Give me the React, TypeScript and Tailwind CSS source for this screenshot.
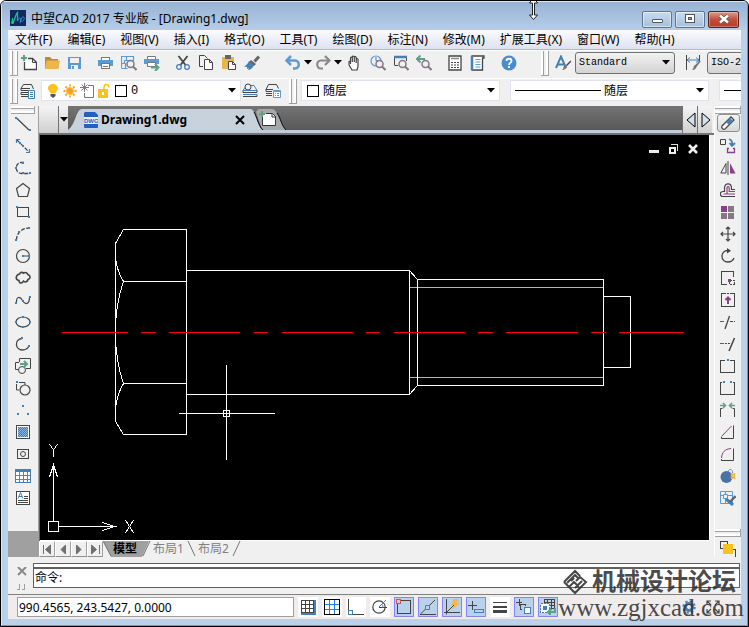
import type { ReactNode } from "react";

const menus = [
  "文件(F)", "编辑(E)", "视图(V)", "插入(I)", "格式(O)", "工具(T)",
  "绘图(D)", "标注(N)", "修改(M)", "扩展工具(X)", "窗口(W)", "帮助(H)",
];

const K = "#444444";
const B = "#4480b8";
const L = "#5b9bd5";
const P = "#8a3f8a";
const G = "#5fa08a";
const Y = "#fcc21c";

function Svg({ children, w = 16, h = 16, crisp = false }: { children: ReactNode; w?: number; h?: number; crisp?: boolean }) {
  return (
    <svg
      width={w}
      height={h}
      viewBox={`0 0 ${w} ${h}`}
      fill="none"
      stroke={K}
      shapeRendering={crisp ? "crispEdges" : "auto"}
      className="block shrink-0"
      aria-hidden="true"
    >
      {children}
    </svg>
  );
}

function Tool({ label, children }: { label: string; children: ReactNode }) {
  return (
    <button type="button" aria-label={label} className="flex h-4 w-4 shrink-0 items-center justify-center">
      {children}
    </button>
  );
}

function Grip() {
  return (
    <div className="flex h-[26px] shrink-0 gap-[2px] border-b border-[#a0a0a0]">
      <span className="w-[3px] border-r border-[#a0a0a0] bg-white" />
      <span className="w-[3px] border-r border-[#a0a0a0] bg-white" />
    </div>
  );
}

function SideGrip() {
  return (
    <div className="flex w-full flex-col gap-[2px] border-r border-[#a0a0a0]">
      <span className="h-[3px] border-b border-[#a0a0a0] bg-white" />
      <span className="h-[3px] border-b border-[#a0a0a0] bg-white" />
    </div>
  );
}

function Caret() {
  return (
    <svg width="8" height="5" viewBox="0 0 8 5" className="block shrink-0" aria-hidden="true">
      <path d="M0 0h8L4 4.500z" fill="#000" />
    </svg>
  );
}

const glass = (
  <>
    <circle cx="9.500" cy="9" r="3.500" fill="#f0f0f0" stroke="#857785" strokeWidth="1.500" />
    <path d="M12 11.500l3.500 3.500" stroke="#857785" strokeWidth="2" />
  </>
);

const fileTools = [
  {
    label: "新建",
    icon: (
      <Svg>
        <path d="M3.500 7v7.500h12v-7l-4-4H7" fill="#fff" strokeWidth="1.300" />
        <path d="M11.500 3.500v4h4" />
        <path d="M3 0v6M0 3h6" stroke={G} strokeWidth="2" />
      </Svg>
    ),
  },
  {
    label: "打开",
    icon: (
      <Svg>
        <path d="M1 13.500V2h5l2 2h6v9.500z" fill="#c08a30" stroke="none" />
        <path d="M1 14l1.500-8.500H16L14.500 14z" fill="#edb64d" stroke="none" />
      </Svg>
    ),
  },
  {
    label: "保存",
    icon: (
      <Svg>
        <path d="M1 2h13v12H1z" fill={L} stroke="none" />
        <path d="M3 3h9v5H3zM4 10h7v4H4z" fill="#f0f0f0" stroke="none" />
        <path d="M5 11h2v3H5z" fill={L} stroke="none" />
      </Svg>
    ),
  },
];

const printTools = [
  {
    label: "打印",
    icon: (
      <Svg crisp>
        <path d="M3.500 2.500h8v3h-8z" fill="#fff" stroke="#777" />
        <path d="M0 5h15v6H0z" fill={L} stroke="none" />
        <path d="M3.500 8.500h8v5h-8z" fill="#fff" stroke="#777" />
        <path d="M5 11.500h5" stroke="#777" />
      </Svg>
    ),
  },
  {
    label: "打印预览",
    icon: (
      <Svg>
        <path d="M.5 13V1.500h12V6M.5 8.500h4V13M.5 13.500h6M5.500 1.500v4h7M3.500 8.500v-3h3" stroke={L} strokeWidth="1.200" />
        {glass}
      </Svg>
    ),
  },
  {
    label: "发布",
    icon: (
      <Svg>
        <path d="M3.500 1.500h8v3h-8z" fill="#fff" stroke="#777" />
        <path d="M0 4h15v5H0z" fill={L} stroke="none" />
        <path d="M3.500 7.500h8v4h-8z" fill="#fff" stroke="#777" />
        <path d="M7 12.500h7M11 9l3.500 3.500L11 16" stroke={G} strokeWidth="2" />
      </Svg>
    ),
  },
];

const editTools = [
  {
    label: "剪切",
    icon: (
      <Svg>
        <path d="M3.500 1l7 9M12.500 1l-7 9" strokeWidth="1.800" />
        <circle cx="4" cy="12" r="2.300" stroke={B} strokeWidth="1.300" />
        <circle cx="12" cy="12" r="2.300" stroke={B} strokeWidth="1.300" />
      </Svg>
    ),
  },
  {
    label: "复制",
    icon: (
      <Svg>
        <path d="M5 11.500H1.500v-11h5l3 3" />
        <path d="M6.500 4.500h5l3 3v7h-8z" fill="#fff" />
        <path d="M11.500 4.500v3h3" />
      </Svg>
    ),
  },
  {
    label: "粘贴",
    icon: (
      <Svg>
        <path d="M1 2h12v12H1z" fill="#e8b44c" stroke="none" />
        <path d="M4 0h6v4H4z" fill="#666" stroke="none" />
        <path d="M7.500 6.500h4l3 3v5h-7z" fill="#fff" />
        <path d="M11.500 6.500v3h3" />
      </Svg>
    ),
  },
  {
    label: "特性匹配",
    icon: (
      <Svg>
        <path d="M15 1.500l-4.500 5" strokeWidth="3" stroke="#666" />
        <path d="M7 5l5 4-2 2-5-4z" fill="#666" stroke="none" />
        <path d="M5 6l5 4.500c-2 3-4 4.500-6 4.500l1-2-2 1 0-2-3-.5C3 10 4 8 5 6z" fill={B} stroke="none" />
      </Svg>
    ),
  },
];

const zoomTools = [
  {
    label: "平移",
    icon: (
      <Svg>
        <path
          d="M5 15c-1-2-3-4-3-5.500V7c0-1 1.500-1 1.500 0v2V3c0-1.200 1.800-1.200 1.800 0v4V2c0-1.200 2-1.200 2 0v5V2.500c0-1.200 1.900-1.200 1.900 0V8V4.500c0-1.200 1.800-1.200 1.800 0V11c0 2-1 3-1 4z"
          fill="#fff"
          strokeWidth="1.200"
        />
      </Svg>
    ),
  },
  {
    label: "实时缩放",
    icon: (
      <Svg>
        <circle cx="6" cy="6" r="5" stroke={L} strokeWidth="1.200" />
        <path d="M6 2v4h3" stroke={B} />
        {glass}
      </Svg>
    ),
  },
  {
    label: "窗口缩放",
    icon: (
      <Svg>
        <path d="M1.500 10V2M13.500 2v4M1.500 10.500H5" />
        <path d="M1 2h13" stroke={B} strokeWidth="2.500" />
        {glass}
      </Svg>
    ),
  },
  {
    label: "缩放上一个",
    icon: (
      <Svg>
        <path d="M1 4h8M4.500.5L1 4l3.500 3.500" stroke={G} strokeWidth="2" />
        {glass}
      </Svg>
    ),
  },
];

const panelTools = [
  {
    label: "计算器",
    icon: (
      <Svg>
        <path d="M2 1h12v14H2z" fill="#fff" strokeWidth="1.300" />
        <path d="M4 3.500h8" stroke="#888" strokeWidth="1.500" />
        <path d="M4 7.500h8M4 10h8M4 12.500h8" strokeDasharray="2 1" strokeWidth="1.200" />
      </Svg>
    ),
  },
  {
    label: "图纸集",
    icon: (
      <Svg>
        <path d="M2 1h12v2h-1.500v12H2z" fill="#fff" strokeWidth="1.300" />
        <path d="M2 1v14" stroke={B} strokeWidth="2.500" />
        <path d="M5.500 4.500h5M5.500 7h5M5.500 9.500h5M5.500 12h5" stroke={L} />
      </Svg>
    ),
  },
];

function ToolGroup({ tools }: { tools: { label: string; icon: ReactNode }[] }) {
  return (
    <div className="flex shrink-0 gap-[7px]">
      {tools.map((t) => (
        <Tool key={t.label} label={t.label}>{t.icon}</Tool>
      ))}
    </div>
  );
}

const drawTools = [
  { label: "直线", icon: <Svg><path d="M1.500 2l12.500 12" strokeWidth="1.200" /><path d="M0 1h2v2H0zM14 13h2v2h-2z" fill={B} stroke="none" /></Svg> },
  { label: "构造线", icon: <Svg><path d="M2 2l12 12" strokeDasharray="4 1.500" strokeWidth="1.200" /><path d="M1.500 5V1.500H5M14.500 11v3.500H11" stroke={B} strokeWidth="1.200" /><path d="M7 7h2v2H7zM4 4h2v2H4z" fill={B} stroke="none" /></Svg> },
  { label: "多段线", icon: <Svg><path d="M9 2.500H6.500C-.5 2.500-.5 13.500 6.500 13.500H15" strokeDasharray="4 1.500" strokeWidth="1.300" /><path d="M7 2h2v2H7zM0 7h2v2H0zM7 12h2v2H7zM14 12h2v2h-2z" fill={B} stroke="none" /></Svg> },
  { label: "正多边形", icon: <Svg><path d="M8 1.500l6.500 5L12.500 14.500h-9L1.500 6.500z" strokeWidth="1.200" /></Svg> },
  { label: "矩形", icon: <Svg crisp><path d="M2.500 3.500h11v9h-11z" /><path d="M1 2h2v2H1zM13 12h2v2h-2z" fill={B} stroke="none" /></Svg> },
  { label: "圆弧", icon: <Svg><path d="M1.500 14C1.500 7 7 2 14 2" strokeDasharray="4 1.500" strokeWidth="1.300" /><path d="M0 13h2v2H0zM3 5h2v2H3zM13 1h2v2h-2z" fill={B} stroke="none" /></Svg> },
  { label: "圆", icon: <Svg><circle cx="8" cy="8" r="6.500" strokeWidth="1.200" /><path d="M8 8h5" /><path d="M7 7h2v2H7zM13 7h2v2h-2z" fill={B} stroke="none" /></Svg> },
  { label: "修订云线", icon: <Svg><path d="M4.500 4c1-2 3-2 4-.8 2-1.400 4-.3 4.300 1.300 3 .8 3 4.300.2 5-.5 2.600-3 3-4.500 1.700C7 13.800 4 13.500 4 10.500 0 10 .5 5 4.500 4z" strokeWidth="1.600" /></Svg> },
  { label: "样条曲线", icon: <Svg><path d="M1.500 11.500C1 4 5 4 7.500 8.500S14.500 13 14.500 5" strokeWidth="1.200" /><path d="M0 10h2v2H0zM7 8h2v2H7zM14 4h2v2h-2z" fill={B} stroke="none" /></Svg> },
  { label: "椭圆", icon: <Svg><ellipse cx="8" cy="8" rx="7" ry="5" strokeWidth="1.200" /><path d="M7 2h2v2H7zM0 7h2v2H0zM14 7h2v2h-2zM7 12h2v2H7z" fill={B} stroke="none" /></Svg> },
  { label: "椭圆弧", icon: <Svg><path d="M7 2.500C-1 3.500 0 14 7.500 14 11 14 13 12 14 10" strokeWidth="1.300" /><path d="M6 1h2v2H6zM13 9h2v2h-2z" fill={B} stroke="none" /></Svg> },
  { label: "插入块", icon: <Svg><path d="M4.500 4V.5h11v10H11M4 4.500H.5v7H4" /><circle cx="7" cy="12" r="3.500" fill="#f0f0f0" /><path d="M5 6h6M9 3l3 3-3 3" stroke={G} strokeWidth="2" /></Svg> },
  { label: "创建块", icon: <Svg><path d="M4 2.500h6V5M1.500 4v6H4" /><circle cx="10" cy="10" r="5" fill="#f0f0f0" strokeWidth="1.200" /><path d="M1 1h2v2H1z" fill={B} stroke="none" /></Svg> },
  { label: "点", icon: <Svg crisp><path d="M7 3h2v2H7zM2 11h2v2H2zM12 11h2v2h-2z" fill={B} stroke="none" /></Svg> },
  {
    label: "图案填充",
    icon: (
      <Svg crisp>
        <path d="M1.500 1.500h13v13h-13z" fill="#fff" />
        <path d="M3 3h10v10H3z" fill="#8ab4e0" stroke="none" />
        <path d="M3 3.500h10M3 5.500h10M3 7.500h10M3 9.500h10M3 11.500h10" stroke={B} strokeDasharray="1 1" />
        <path d="M4 4.500h9M4 6.500h9M4 8.500h9M4 10.500h9M4 12.500h9" stroke={B} strokeDasharray="1 1" />
      </Svg>
    ),
  },
  { label: "面域", icon: <Svg crisp><path d="M2.500 3.500h11v9h-11z" /><circle cx="8" cy="8" r="2.500" shapeRendering="auto" /></Svg> },
  { label: "表格", icon: <Svg crisp><path d="M.5 1.500h15v13H.5z" fill="#fff" stroke={B} /><path d="M0 1h16v3H0z" fill={B} stroke="none" /><path d="M1 7.500h14M1 11.500h14M4.500 4v10M8.500 4v10M12.500 4v10" stroke="#857785" /></Svg> },
  { label: "多行文字", icon: <Svg crisp><path d="M1.500 1.500h13v13h-13z" fill="#fff" /><path d="M3 8.500l2.500-6L8 8.500M4 6.500h3" stroke={B} shapeRendering="auto" /><path d="M9 6.500h4M9 8.500h4M3 10.500h10M3 12.500h10" /></Svg> },
];

const modifyTools = [
  { label: "复制对象", icon: <Svg><path d="M.5 1.500h5v5h-5z" /><path d="M9 1c3 1 3.500 3 3 6M9.500 5l2.500 3 3-3" stroke={B} strokeWidth="1.800" /><path d="M9 10.500H7.500v4h7v-4H13" stroke={P} strokeWidth="1.300" /></Svg> },
  { label: "镜像", icon: <Svg><path d="M6 3.500v9.500H.8z" /><path d="M8 1v14" /><path d="M10 3v10.500h5.500z" fill={P} stroke="none" /></Svg> },
  { label: "偏移", icon: <Svg><path d="M15 14.500H3c-3.500 0-3.500-5 0-5h1.500V6c0-5.500 7-5.500 7 0v1.500H15" strokeWidth="1.200" /><path d="M15 12H3.500M7 12V6c0-1.800 2.200-1.800 2.200 0v3.500H15" stroke={P} strokeWidth="1.200" /></Svg> },
  { label: "阵列", icon: <Svg crisp><path d="M1 2h6v6H1z" fill={P} stroke="none" /><path d="M8 2h6v6H8zM1 9h6v6H1zM8 9h6v6H8z" fill="#857785" stroke="none" /></Svg> },
  { label: "移动", icon: <Svg><path d="M8 1v14M1 8h14M6 3l2-2 2 2M6 13l2 2 2-2M3 6L1 8l2 2M13 6l2 2-2 2" strokeWidth="1.200" /></Svg> },
  { label: "旋转", icon: <Svg><path d="M8 2.500C0 2.500 0 14 8 14c3 0 5-1.500 6-4" strokeWidth="1.300" /><path d="M7 0l4 2.700L7 5.500z" fill={K} stroke="none" /></Svg> },
  { label: "缩放", icon: <Svg crisp><path d="M7 14.500H1.500v-13h12V7" /><path d="M9.500 10.500h5v4h-5z" strokeDasharray="2 1" /><path d="M8 9h3v3H8z" fill={P} stroke="none" /></Svg> },
  { label: "拉伸", icon: <Svg crisp><path d="M4 1.500H1.500v13h13v-13H12" /><path d="M4 1.500h8" strokeDasharray="2 1" /><path d="M8 12V6M5.500 8L8 5.500 10.500 8" stroke={P} strokeWidth="2" shapeRendering="auto" /></Svg> },
  { label: "修剪", icon: <Svg><path d="M0 7.500h4" stroke={P} /><path d="M5 15l4.500-13" strokeWidth="1.300" /><path d="M10 7.500h5" strokeDasharray="3 1" /></Svg> },
  { label: "延伸", icon: <Svg><path d="M0 7.500h4" stroke={P} /><path d="M5 7.500h5" strokeDasharray="2 1" /><path d="M9 15l5.500-13" strokeWidth="1.500" /></Svg> },
  { label: "打断于点", icon: <Svg crisp><path d="M5 2.500H.5v12h14v-12H10" /><path d="M7 1h2v2H7z" fill={B} stroke="none" /></Svg> },
  { label: "打断", icon: <Svg crisp><path d="M2 2.500H.5v12h14v-12H13" /><path d="M3 1h2v2H3zM10 1h2v2h-2z" fill={B} stroke="none" /></Svg> },
  { label: "合并", icon: <Svg><path d="M.5 15V6.500h2M14.500 15V6.500h-2" /><path d="M0 3.500h5M3 1l2.500 2.500L3 6M15 3.500h-5M12 1L9.500 3.500 12 6" stroke={G} strokeWidth="1.600" /></Svg> },
  { label: "倒角", icon: <Svg><path d="M1.500 12.500L11.500 2" stroke={P} /><path d="M13.500 1.500v13h-12V13" /></Svg> },
  { label: "圆角", icon: <Svg><path d="M1.500 12C2 6 5 3 11 2.500" stroke={P} /><path d="M13.500 2.500v12h-12V13" /></Svg> },
  { label: "分解", icon: <Svg><circle cx="6.500" cy="9" r="6" fill="#4a72a5" stroke="none" /><path d="M8 4c1-4 5-3 4.500 1" stroke="#7089b0" /><path d="M11 6.500h4M11 9.500h4M11.500 5v6M14.500 5v6" stroke="#f0b030" strokeWidth="1.500" /></Svg> },
  { label: "编辑多段线", icon: <Svg><path d="M.5 1.500h12v12H.5zM.5 5.500h12M5.500 1.500v12" stroke={L} /><path d="M3.500 4.500h4v4h-4z" fill="#f0f0f0" stroke={L} /><path d="M6 9l7 6" stroke={B} strokeWidth="3" /><path d="M10 12l5.500-6" stroke="#666" strokeWidth="2.500" /></Svg> },
];

const statusModes = [
  { label: "捕捉", on: false, icon: <Svg crisp><path d="M13 1h3v15h-3zM1 13h15v3H1z" fill={B} stroke="none" /><path d="M1.500 1.500h12v12h-12zM5.500 1v12M9.500 1v12M1 5.500h12M1 9.500h12" fill="none" /></Svg> },
  { label: "栅格", on: false, icon: <Svg crisp><path d="M1 5.500h14M1 10.500h14M5.500 1v14M10.500 1v14" stroke="#1c7cff" strokeWidth="1" /><path d="M.5.5h15v15H.5z" stroke="#000" /></Svg> },
  { label: "正交", on: false, icon: <Svg crisp><path d="M.5 0v15.500H16" /><path d="M.5 11.500h4v4h-4z" stroke={B} /></Svg> },
  { label: "极轴", on: false, icon: <Svg><circle cx="7" cy="8" r="6.200" strokeWidth="1.200" /><path d="M7 8.500h8" /><path d="M7 8l7-7M10 5.500c1 1 1 2 .5 3" stroke={B} /></Svg> },
  { label: "对象捕捉", on: true, icon: <Svg crisp><path d="M1.500 1.500h13v13h-13z" /><path d="M.5.5h4v4h-4z" fill="#b9d1ea" stroke="#e05030" /></Svg> },
  { label: "对象追踪", on: true, icon: <Svg><path d="M.5 15L15 1M0 15.500h16" /><path d="M5.500 6.500h4v4h-4z" fill="#b9d1ea" stroke={B} /></Svg> },
  { label: "动态 UCS", on: true, icon: <Svg><path d="M2.500 0v15.500M0 13.500h16M2.500 13.500l8-8" /><path d="M9.500 0h5l-2 4H16L8 11l2.500-5H7.500z" fill="#f5b840" stroke="none" /></Svg> },
  { label: "动态输入", on: true, icon: <Svg crisp><path d="M0 6.500h9M4.500 2v9" /><path d="M6.500 10.500h9v3h-9z" stroke={B} /></Svg> },
  { label: "线宽", on: false, icon: <Svg crisp><path d="M1 3.500h14" /><path d="M1 8h14" strokeWidth="2" /><path d="M1 12.500h14" strokeWidth="3" /></Svg> },
  { label: "循环选择", on: true, icon: <Svg crisp><path d="M0 3.500h6M3.500 0v7" /><path d="M6 10.500h-1.500v-5h5V7" /><path d="M8.500 8.500h6v6h-6z" fill="#fff" stroke={B} /></Svg> },
  { label: "模型空间", on: true, icon: <Svg crisp><path d="M4.500.5h10v9h-10zM7.500 0v9M11.500 0v9M4 3.500h10M4 6.500h10" /><path d="M.5 4.500h9v9h-9z" fill="#fff" stroke={B} strokeDasharray="2 1" /><path d="M3 7h4v4H3z" fill={B} stroke="none" /><path d="M15 9v4H8M11 10l-3 3 3 3" stroke={G} strokeWidth="2" /></Svg> },
];

function TitleBar() {
  return (
    <header className="flex h-7 items-center bg-linear-to-b from-[#98b3d3] to-[#b5cde8] pl-2 pr-2">
      <svg width="16" height="16" viewBox="0 0 16 16" className="mt-1 shrink-0" aria-hidden="true">
        <path d="M0 0h16v16H0z" fill="#102a5c" />
        <path d="M2.500 8v5M2.500 13C5 11 5 5 7.500 2.500V11" stroke="#1fb8a0" strokeWidth="1.300" fill="none" />
        <path d="M7.500 11c2-4 3-4 3-1.500s2.500 2.500 3.500 0-1-3.500-2.500-1.500L10 13" stroke="#2f8fd8" fill="none" />
        <circle cx="2.500" cy="12.500" r="1.500" fill="#20d060" />
      </svg>
      <h1 className="ml-[5px] mt-1.5 flex-1 whitespace-nowrap text-xs font-normal text-black">中望CAD 2017 专业版 - [Drawing1.dwg]</h1>
      <div className="mt-1.5 flex h-[17px] gap-[3px]">
        <button type="button" aria-label="最小化" className="flex w-[30px] items-end justify-center rounded-[2px] border border-[#5c7591] bg-linear-to-b from-[#c8dcf0] to-[#a5bfdb] pb-1 ring-1 ring-inset ring-white/50">
          <span className="h-1 w-[11px] rounded-[1px] border border-[#555] bg-white" />
        </button>
        <button type="button" aria-label="还原" className="flex w-[30px] items-center justify-center rounded-[2px] border border-[#5c7591] bg-linear-to-b from-[#c8dcf0] to-[#a5bfdb] ring-1 ring-inset ring-white/50">
          <Svg w={12} h={10} crisp>
            <path d="M1.500.5h9v8h-9z" fill="#fff" stroke="#555" />
            <path d="M4.500 3.500h3v2h-3z" fill="#8aa8c8" stroke="#555" />
          </Svg>
        </button>
        <button type="button" aria-label="关闭" className="flex w-[31px] items-center justify-center rounded-[2px] border border-[#5a2020] bg-linear-to-b from-[#d99a8c] via-[#c0503c] to-[#b83c28] ring-1 ring-inset ring-white/30">
          <Svg w={12} h={10}>
            <path d="M2 1.500l8 7M10 1.500l-8 7" stroke="#554" strokeWidth="4" />
            <path d="M2 1.500l8 7M10 1.500l-8 7" stroke="#fff" strokeWidth="2.500" />
          </Svg>
        </button>
      </div>
    </header>
  );
}

function StandardToolbar() {
  return (
    <div className="flex h-7 items-center overflow-hidden border-t border-white pb-1 pl-0.5">
      <Grip />
      <div className="ml-[3px] flex shrink-0 items-center gap-[15px]">
        <ToolGroup tools={fileTools} />
        <ToolGroup tools={printTools} />
        <ToolGroup tools={editTools} />
        <div className="flex items-center gap-[3px] pl-2.5">
          <Tool label="放弃">
            <Svg>
              <path d="M2 5.500h8c5 0 5 8 0 8H8" stroke={L} strokeWidth="2.500" />
              <path d="M6 1L1.500 5.500 6 10" stroke={L} strokeWidth="2.500" />
            </Svg>
          </Tool>
          <Caret />
          <Tool label="重做">
            <Svg>
              <path d="M14 5.500H6c-5 0-5 8 0 8h2" stroke="#888" strokeWidth="2.200" />
              <path d="M10 1l4.500 4.500L10 10" stroke="#888" strokeWidth="2.200" />
            </Svg>
          </Tool>
          <Caret />
          <div className="ml-0.5">
            <ToolGroup tools={zoomTools} />
          </div>
        </div>
        <ToolGroup tools={panelTools} />
        <Tool label="帮助">
          <Svg>
            <circle cx="8" cy="8" r="7.500" fill="#4a8cd0" stroke="none" />
            <path d="M5.500 6c0-3 5-3 5 0 0 2-2.500 1.800-2.500 4M8 11v2" stroke="#fff" strokeWidth="1.800" />
          </Svg>
        </Tool>
      </div>
      <div className="ml-6 flex shrink-0 items-center">
        <Grip />
        <div className="ml-1.5">
          <Tool label="文字样式">
            <Svg>
              <path d="M1 13L6 1.500 11 13M3 9.500h6" stroke={B} strokeWidth="2" />
              <path d="M16 6l-5 5" strokeWidth="1.500" />
              <path d="M12 10c0 3-2 5-5 5 2-1 1-4 3-5z" fill="#777" stroke="none" />
            </Svg>
          </Tool>
        </div>
        <div className="ml-1 flex h-[22px] w-[100px] items-center rounded-[3px] border border-[#707070] bg-linear-to-b from-[#f2f2f2] to-[#d4d4d4] pl-[3px] pr-1">
          <select aria-label="文字样式" className="min-w-0 flex-1 appearance-none bg-transparent font-['Liberation_Mono',monospace] text-[10px] text-black">
            <option>Standard</option>
          </select>
          <Caret />
        </div>
        <div className="ml-2.5">
          <Tool label="标注样式">
            <Svg>
              <path d="M1.500 0v15M14.500 0v6" />
              <path d="M2 5h12M5 2.500L2 5l3 2.500M11 2.500L14 5l-3 2.500" stroke={B} />
              <path d="M15 6l-4 5" strokeWidth="2" stroke="#777" />
              <path d="M12 9c0 4-2 6-5 6 2-1 1-4 3-5z" fill="#777" stroke="none" />
            </Svg>
          </Tool>
        </div>
        <div className="ml-1.5 flex h-[22px] w-[100px] items-center rounded-[3px] border border-[#707070] bg-linear-to-b from-[#f2f2f2] to-[#d4d4d4] pl-[3px] pr-1">
          <select aria-label="标注样式" className="min-w-0 flex-1 appearance-none bg-transparent font-['Liberation_Mono',monospace] text-[10px] text-black">
            <option>ISO-25</option>
          </select>
        </div>
      </div>
    </div>
  );
}

function LayerToolbar() {
  return (
    <div className="flex h-7 shrink-0 items-center overflow-hidden border-t border-white pb-1 pl-0.5">
      <Grip />
      <div className="ml-0.5 flex shrink-0 items-center gap-[5px]">
        <Tool label="图层特性">
          <Svg>
            <path d="M3.500 1.500h8l2 4.500M3.500 1.500L1 5.500h9" />
            <path d="M1 5.500v2h8M1 9.500h7M1 9.500v2h7M1 13.500h7" />
            <path d="M8.500 7.500h6v8h-6z" fill="#fff" stroke={B} />
            <path d="M10 9.500h3M10 11.500h3M10 13.500h3" stroke={B} />
          </Svg>
        </Tool>
        <div className="flex h-[21px] w-[200px] items-center gap-[3px] border border-[#e0e3ea] bg-white px-1">
          <Svg w={14}>
            <path d="M2 5.500c0-6 10-6 10 0 0 2.500-2.500 3-2.500 5h-5C4.500 8.500 2 8 2 5.500z" fill={Y} stroke="none" />
            <path d="M4.500 11h5v2l-2.500 2-2.500-2z" fill="#555" stroke="none" />
          </Svg>
          <Svg w={14}>
            <circle cx="7" cy="8" r="3.500" fill="#f8a020" stroke="#f8c040" />
            <path d="M7 1.500v2M7 12.500v2M.5 8h2M11.500 8h2M2.500 3.500L4 5M10 11l1.500 1.500M11.500 3.500L10 5M4 11l-1.500 1.500" stroke="#f8a020" strokeWidth="1.800" />
          </Svg>
          <Svg w={14}>
            <path d="M8 2.500h5.500v12h-9V10" stroke="#777" />
            <path d="M4.500 0v9M0 4.500h9M1.500 1.500l6 6M7.500 1.500l-6 6" stroke="#857785" />
          </Svg>
          <Svg w={14}>
            <path d="M1 6h10v9H1z" fill={Y} stroke="none" />
            <path d="M7 6V4.500c0-4 5-4 5 0" stroke={Y} strokeWidth="1.500" />
            <path d="M5 9h2v3H5z" fill="#fff" stroke="none" />
          </Svg>
          <Svg w={14} crisp><path d="M1.500 2.500h11v11h-11z" fill="#fff" stroke="#000" /></Svg>
          <select aria-label="图层" className="min-w-0 flex-1 appearance-none bg-transparent font-['Liberation_Mono',monospace] text-xs text-black">
            <option>0</option>
          </select>
          <Caret />
        </div>
        <div className="-ml-1 flex gap-[7px]">
          <Tool label="对象图层">
            <Svg>
              <circle cx="6" cy="4" r="3" />
              <path d="M9 2.500h3l3 5H1l2-3" stroke={B} />
              <path d="M1 7.500v2h14v-2M1 13.500h14v-2" /><path d="M1 11.500h14" stroke={B} />
            </Svg>
          </Tool>
          <Tool label="图层状态">
            <Svg>
              <path d="M1 6.500l2.500-5h8l2 4M1 6.500h7" />
              <path d="M1 6.500v2h6M1 12.500h6M1 10.500h6" />
              <path d="M8.500 7.500h7v7h-7z" fill="#fff" stroke={L} />
              <path d="M8 8.500h8M10 10.500h1M12 10.500h2M10 12.500h1M12 12.500h2" stroke={L} />
            </Svg>
          </Tool>
        </div>
      </div>
      <div className="ml-2 flex shrink-0 items-center">
        <Grip />
        <div className="ml-1 flex h-[21px] w-[199px] items-center gap-[3px] border border-[#e0e3ea] bg-white px-1">
          <Svg w={14} crisp><path d="M1.500 2.500h11v11h-11z" fill="#fff" stroke="#000" /></Svg>
          <select aria-label="颜色" className="min-w-0 flex-1 appearance-none bg-transparent text-xs text-black">
            <option>随层</option>
          </select>
          <Caret />
        </div>
        <div className="ml-2.5 flex h-[21px] w-[199px] items-center gap-[3px] border border-[#e0e3ea] bg-white px-1">
          <span className="h-px w-[86px] bg-black" />
          <select aria-label="线型" className="min-w-0 flex-1 appearance-none bg-transparent text-xs text-black">
            <option>随层</option>
          </select>
          <Caret />
        </div>
        <div className="ml-2.5 flex h-[21px] w-[199px] items-center gap-[3px] border border-[#e0e3ea] bg-white px-1">
          <span className="h-px w-[86px] bg-black" />
          <select aria-label="线宽" className="min-w-0 flex-1 appearance-none bg-transparent text-xs text-black">
            <option>随层</option>
          </select>
        </div>
      </div>
    </div>
  );
}

function DocumentTabs() {
  return (
    <div className="border-b-2 border-[#707478]">
      <div className="flex h-[27px] border-b-[3px] border-[#c3cdd9] bg-linear-to-b from-[#747474] to-[#585858]">
        <span className="-mb-[3px] w-5 border-r border-[#707070] bg-linear-to-b from-[#f4f4f4] to-[#d0d0d0]" />
        <button type="button" aria-label="标签列表" className="-mb-[3px] flex w-[9px] items-center justify-center bg-linear-to-b from-[#f4f4f4] to-[#d0d0d0]">
          <Caret />
        </button>
        <div className="flex shrink-0">
          <svg width="18" height="24" viewBox="0 0 18 24" className="block h-full" aria-hidden="true">
            <path d="M0 24C8 18 8 3 14 3h4v21z" fill="#c8d2dd" />
          </svg>
          <div className="mt-[3px] flex items-center bg-[#c8d2dd]">
            <svg width="14" height="16" viewBox="0 0 14 16" className="-ml-0.5" aria-hidden="true">
              <path d="M1 0h10l3 3v12a1 1 0 0 1-1 1H1a1 1 0 0 1-1-1V1z" fill="#2560c0" />
              <path d="M0 5h14v7H0z" fill="#e8f0fa" />
              <text x="0" y="11" fontSize="6" fontWeight="bold" fill="#2560c0" fontFamily="Liberation Sans, sans-serif">DWG</text>
            </svg>
            <span className="ml-[3px] w-[134px] text-xs font-bold text-black">Drawing1.dwg</span>
            <button type="button" aria-label="关闭标签" className="mr-1">
              <Svg w={10} h={10}><path d="M1 1l8 8M9 1l-8 8" stroke="#000" strokeWidth="2" /></Svg>
            </button>
          </div>
          <button type="button" aria-label="新建标签" className="block">
            <svg width="40" height="24" viewBox="0 0 40 24" className="block h-full" fill="none" aria-hidden="true">
              <path d="M7 6c1-2 2-3 4-3h12c6 0 7 14 14 21H13z" fill="#a4a8aa" />
              <path d="M0 3h1c6 0 6 14 12 21H0z" fill="#c8d2dd" />
              <path d="M5 6c3 5 4 13 9 18M28 7c4 5 4 12 9 17" stroke="#111" />
              <path d="M13.500 10v9.500h13v-9l-3-3H17" fill="#fff" stroke="#333" />
              <path d="M23 8v3h4" stroke="#333" />
              <path d="M13 5v6M10 8h6" stroke={G} strokeWidth="2" />
            </svg>
          </button>
        </div>
        <div className="-mb-[3px] ml-auto flex">
          {["M11 2L3 9l8 7z", "M3 2l8 7-8 7z"].map((d, i) => (
            <button key={d} type="button" aria-label={i ? "下一个" : "上一个"} className="flex w-[15px] items-center justify-center border-l border-[#707070] bg-linear-to-b from-[#f4f4f4] to-[#d0d0d0]">
              <Svg w={13} h={18}><path d={d} fill="#d4e0ec" stroke="#000" /></Svg>
            </button>
          ))}
        </div>
        <span className="-mb-[3px] w-0.5 bg-[#f0f0f0]" />
      </div>
    </div>
  );
}

function Canvas() {
  return (
    <div className="relative flex-1 border-b border-white bg-black">
      <svg
        viewBox="40 135 669 405"
        preserveAspectRatio="xMinYMin meet"
        fill="none"
        stroke="#fff"
        shapeRendering="crispEdges"
        className="block h-[405px] w-full"
        role="img"
        aria-label="Drawing1.dwg"
      >
        {/* bolt head */}
        <path d="M186.500 229.500h-63l-8 14v178l8 13h63zM123.500 281.500h63M123.500 383.500h63" />
        <path d="M115.500 257.500q1 12 8 24q-8 22-8 51t8 51q-7 12-8 25" />
        {/* shank, thread and tip */}
        <path d="M186.500 270.500h223v124h-223M409.500 270.500l8 9v106l-8 9M417.500 279.500h186v106h-186M603.500 296.500h27v71h-27" />
        <path d="M410 287.500h7M418 287.500h185M410 377.500h7M418 377.500h185" stroke="#00ffff" />
        <path
          d="M62 332.500h66M141 332.500h15M169 332.500h71M254 332.500h14M282 332.500h71M366 332.500h14M394 332.500h71M478 332.500h15M506 332.500h72M591 332.500h15M619 332.500h65"
          stroke="#ff0000"
        />
        {/* crosshair */}
        <path d="M179 413.500h96M226.500 365v95M223.500 410.500h6v6h-6z" />
        {/* UCS axes */}
        <path d="M48.500 521.500h10v10h-10zM53.500 521v-56M49.500 477l4-12 4 12M59 526.500h56M102 522.500l13 4-13 4" />
        <path d="M49.500 444l4 6v7M57.500 444l-4 6M125.500 520l8 13M133.500 520l-8 13" />
      </svg>
      <div className="absolute right-2.5 top-2 flex gap-2">
        <button type="button" aria-label="最小化图形"><Svg w={12} h={12} crisp><path d="M2 7h10v3H2z" fill="#eee" stroke="none" /></Svg></button>
        <button type="button" aria-label="还原图形">
          <Svg w={12} h={12} crisp>
            <path d="M4 1.500h6.500V8" stroke="#ddd" />
            <path d="M3 5h5v5H3z" stroke="#eee" strokeWidth="2" />
          </Svg>
        </button>
        <button type="button" aria-label="关闭图形"><Svg w={12} h={12}><path d="M2 2l8 8M10 2l-8 8" stroke="#eee" strokeWidth="2.500" /></Svg></button>
      </div>
    </div>
  );
}

const navPaths = [
  "M3.500 3v9M10.500 3L5.500 7.500l5 4.500z",
  "M9.500 3L5 7.500l4.500 4.500z",
  "M4.500 3l4.500 4.500-4.500 4.500z",
  "M3.500 3l5 4.500-5 4.500zM11.500 3v9",
];

function LayoutTabs() {
  return (
    <div className="flex h-4 items-stretch text-xs text-[#808080]">
      {navPaths.map((d) => (
        <button key={d} type="button" aria-label="切换布局" className="flex w-4 items-center border border-b-[#909090] border-l-white border-r-[#a0a0a0] border-t-white">
          <Svg w={14} h={14}><path d={d} fill="#707070" stroke="#707070" /></Svg>
        </button>
      ))}
      <svg width="10" height="16" viewBox="0 0 10 16" className="block" aria-hidden="true"><path d="M0 0h10v16H8z" fill="#a0a0a0" /><path d="M0 0l8 15" stroke="#777" /></svg>
      <button type="button" className="bg-[#a0a0a0] leading-4 font-bold text-black">模型</button>
      <svg width="16" height="16" viewBox="0 0 16 16" className="block" aria-hidden="true"><path d="M0 0h12L5 16H0z" fill="#a0a0a0" /><path d="M13 0L6 15" stroke="#777" /></svg>
      <button type="button" className="leading-4">布局1</button>
      <svg width="14" height="16" viewBox="0 0 14 16" className="block" aria-hidden="true"><path d="M4 0l7 15" stroke="#777" /></svg>
      <button type="button" className="leading-4">布局2</button>
      <svg width="14" height="16" viewBox="0 0 14 16" className="block" aria-hidden="true"><path d="M11 0L4 15" stroke="#777" /></svg>
    </div>
  );
}

function CommandLine() {
  return (
    <div className="flex h-[37px] pb-1.5 pl-2 pt-1.5">
      <div className="flex w-[17px] shrink-0 flex-col gap-2 pt-1">
        <button type="button" aria-label="关闭命令行" className="w-3">
          <Svg w={12} h={9}><path d="M2 0l8 8M10 0l-8 8" stroke="#888" strokeWidth="2" /></Svg>
        </button>
        <Svg w={10} h={6} crisp><path d="M1 5.500h2.500V0M6 5.500h2.500V0" stroke="#a0a0a0" /></Svg>
      </div>
      <div className="mr-px flex-1 border border-[#606060] bg-white">
        <div className="mt-[3px] flex items-center border-t-2 border-[#606060] pl-px">
          <label htmlFor="cmd" className="text-xs leading-[18px] text-black">命令:</label>
          <input id="cmd" type="text" className="min-w-0 flex-1 bg-transparent text-xs outline-none" />
        </div>
      </div>
    </div>
  );
}

function StatusBar() {
  return (
    <footer className="flex h-[25px] items-center border-t border-[#808080] bg-[#f0ecec] pl-[9px] pr-3">
      <input
        type="text"
        readOnly
        aria-label="坐标"
        defaultValue="990.4565, 243.5427, 0.0000"
        className="h-5 w-[277px] shrink-0 border border-[#a0a0a0] bg-white px-px text-xs text-black"
      />
      <div className="ml-1 flex gap-1">
        {statusModes.map((m) => (
          <button
            key={m.label}
            type="button"
            aria-label={m.label}
            aria-pressed={m.on}
            className={`flex h-5 w-5 items-center justify-center border ${m.on ? "border-[#8484f4] bg-[#b9d1ea]" : "border-white bg-white"}`}
          >
            {m.icon}
          </button>
        ))}
      </div>
      <div className="ml-auto flex gap-2 pr-2">
        <Tool label="设置">
          <Svg>
            <circle cx="8" cy="8" r="3.500" stroke="#4480b8" strokeWidth="3" />
            <circle cx="8" cy="8" r="5.700" stroke="#4480b8" strokeWidth="2" strokeDasharray="2.300 2.170" />
          </Svg>
        </Tool>
        <Tool label="全屏">
          <Svg><path d="M2 6V2h4M10 2h4v4M14 10v4h-4M6 14H2v-4M2 2l4 4M14 2l-4 4M14 14l-4-4M2 14l4-4" strokeWidth="1.200" /></Svg>
        </Tool>
      </div>
    </footer>
  );
}

function Watermark() {
  return (
    <div className="pointer-events-none absolute bottom-1.5 right-1 flex flex-col items-end text-[#333]/90">
      <div className="flex items-center gap-1 pr-2">
        <svg width="26" height="26" viewBox="0 0 26 26" fill="none" stroke="currentColor" strokeWidth="2" aria-hidden="true">
          <path d="M2 13L13 2l5 5M5 14l8-8 3 3M2 13l5 5M9 12l3-3M14 12l4-4 6 5-11 11-6-6 5-5 5 5M13 19l7-7" />
        </svg>
        <span className="font-['Liberation_Serif','Noto_Sans_CJK_SC',serif] text-2xl leading-7 font-bold">机械设计论坛</span>
      </div>
      <span className="font-['Liberation_Serif',serif] text-[25px] leading-6">www.zgjxcad.com</span>
    </div>
  );
}

export default function App() {
  return (
    <div className="relative flex min-h-screen flex-col overflow-hidden rounded-t-md border border-black bg-[#b9d1ea] font-['Noto_Sans','Noto_Sans_CJK_SC',sans-serif]">
      <div className="flex flex-1 flex-col border border-b-[#30b4d4] border-l-[#d4e6f6] border-r-[#30b4d4] border-t-[#d4e6f6]">
        <TitleBar />
        <main className="flex flex-1 flex-col px-1.5 pb-1.5">
          <div className="flex flex-1 flex-col overflow-hidden bg-[#f0f0f0]">
            <nav className="flex h-5 items-center gap-[15px] overflow-hidden whitespace-nowrap border-b border-[#b4b8c8] bg-linear-to-b from-[#fcfcfe] to-[#dde2f0] pl-[7px] text-xs text-black">
              {menus.map((m) => (
                <button key={m} type="button" className="shrink-0">{m}</button>
              ))}
            </nav>
            <StandardToolbar />
            <LayerToolbar />
            <div className="flex flex-1">
              <aside className="flex w-[30px] shrink-0 flex-col">
                <div className="px-[3px]"><SideGrip /></div>
                <div className="flex flex-1 flex-col items-center gap-1.5 pt-0.5">
                  {drawTools.map((t) => (
                    <Tool key={t.label} label={t.label}>{t.icon}</Tool>
                  ))}
                </div>
                <div className="h-[26px] bg-[#a0a0a0]" />
              </aside>
              <section className="flex min-w-0 flex-1 flex-col border-l border-[#a0a0a0]">
                <DocumentTabs />
                <div className="mr-1 flex flex-1 flex-col border-l border-r border-l-[#606060] border-r-white">
                  <Canvas />
                </div>
                <LayoutTabs />
              </section>
              <aside className="flex w-[27px] shrink-0 flex-col border-l border-white">
                <SideGrip />
                <div className="flex flex-1 flex-col items-center gap-1.5">
                  <button type="button" aria-label="删除" className="flex h-[18px] w-[23px] shrink-0 items-center justify-center rounded-[3px] border border-[#909090] bg-linear-to-b from-[#f4f4f4] to-[#d8d8d8]">
                    <Svg>
                      <path d="M2 11L11 2l3 3-9 9c-2 1-4-1-3-3z" fill="#fff" strokeWidth="1.300" />
                      <path d="M6 7l4-4 3 3-4 4z" fill={B} stroke="none" />
                    </Svg>
                  </button>
                  {modifyTools.map((t) => (
                    <Tool key={t.label} label={t.label}>{t.icon}</Tool>
                  ))}
                </div>
                <div className="flex flex-col items-center gap-1">
                  <SideGrip />
                  <Tool label="绘图次序">
                    <Svg crisp>
                      <path d="M3 7.500H.5v-7h7V3M12 8.500h3.500v7" strokeWidth="1" />
                      <path d="M3 3h10v10H3z" fill={Y} stroke="none" />
                    </Svg>
                  </Tool>
                </div>
              </aside>
            </div>
            <CommandLine />
            <StatusBar />
          </div>
        </main>
      </div>
      <svg width="9" height="20" viewBox="0 0 9 20" className="absolute -top-px left-[528px]" aria-hidden="true">
        <path d="M3.500 3H.5l2-3h4l2 3h-3v12h3l-4 4.500-4-4.500h3z" fill="#fff" stroke="#222" />
      </svg>
      <Watermark />
    </div>
  );
}
